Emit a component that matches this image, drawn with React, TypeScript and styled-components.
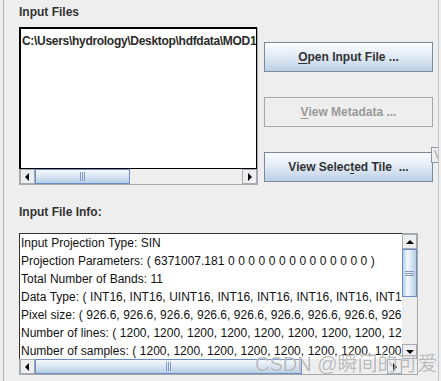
import React from 'react'
import { styled, createGlobalStyle } from 'styled-components'

const GlobalStyle = createGlobalStyle`
  html, body {
    margin: 0;
    padding: 0;
    background: #eeeeee;
  }
  body {
    font-family: "Liberation Sans", Arial, sans-serif;
    font-size: 12px;
  }
`;

const Window = styled.div`
  position: relative;
  width: 438px;
  height: 381px;
  border-right: 1px solid #c4c4c4;
  overflow: hidden;
`;

const Panel = styled.div`
  margin-left: 3px;
  width: 430px;
  height: 381px;
  border-left: 1px solid #b4b4b4;
  border-right: 1px solid #c4c4c4;
  padding-left: 15px;
  box-sizing: content-box;
`;

const SectionTitle = styled.div<{ $top: number; $bottom: number }>`
  padding-top: ${({ $top }) => $top}px;
  padding-bottom: ${({ $bottom }) => $bottom}px;
  line-height: 16px;
  font-weight: 700;
  color: #333333;
`;

const TopRow = styled.div`
  display: flex;
  gap: 6px;
`;

const ScrollPane = styled.div<{ $width: number; $height: number }>`
  width: ${({ $width }) => $width}px;
  height: ${({ $height }) => $height}px;
  flex-shrink: 0;
  display: grid;
  grid-template-rows: minmax(0, 1fr) 15px;
  grid-template-columns: minmax(0, 1fr);
  box-sizing: border-box;
  border: 1px solid #a8a8a8;
  border-top: none;
  border-left: none;
  overflow: hidden;
`;

const ViewRow = styled.div`
  display: flex;
  min-height: 0;
  min-width: 0;
`;

const Viewport = styled.div`
  flex: 1;
  min-width: 0;
  background: #ffffff;
  border-top: 2px solid #000000;
  border-left: 2px solid #000000;
  border-right: 1px solid #000000;
  border-bottom: 1px solid #000000;
  overflow: hidden;
  white-space: nowrap;
`;

const TextViewport = styled(Viewport)`
  border-top: 1px solid #333;
  border-left: 1px solid #333;
  border-right: none;
  border-bottom: none;
`;

const PathLine = styled.div`
  padding: 4px 0 0 1px;
  line-height: 16px;
  font-weight: 700;
  color: #2a2a2a;
  letter-spacing: -0.3px;
`;

const InfoLine = styled.div`
  padding-left: 1px;
  line-height: 18px;
  color: #111111;
  word-spacing: 0.2px;
`;

const HBar = styled.div<{ $corner?: boolean }>`
  display: grid;
  grid-template-columns: 15px minmax(0, 1fr) 15px ${({ $corner }) => ($corner ? '15px' : '')};
  background: #eeeeee;
  border-left: 1px solid #a8a8a8;
`;

const VBar = styled.div`
  width: 15px;
  flex-shrink: 0;
  display: grid;
  grid-template-rows: 15px minmax(0, 1fr) 15px;
  background: #eeeeee;
  border-top: 1px solid #a8a8a8;
`;

const ArrowButton = styled.div`
  display: flex;
  align-items: center;
  justify-content: center;
  background: #eeeeee;
  border: 1px solid #a3aab3;
  box-sizing: border-box;
`;

const Track = styled.div`
  position: relative;
  background: #eeeeee;
`;

const Thumb = styled.div<{ $vertical?: boolean }>`
  position: absolute;
  display: flex;
  align-items: center;
  justify-content: center;
  box-sizing: border-box;
  border: 1px solid #6a8cc6;
  background: ${({ $vertical }) =>
    $vertical
      ? 'linear-gradient(to right, #b8cfe5 0%, #f4f8fc 35%, #dce7f3 60%, #b8cfe5 100%)'
      : 'linear-gradient(to bottom, #f4f8fc 0%, #dce7f3 45%, #b8cfe5 100%)'};
`;

const Grip = styled.div<{ $vertical?: boolean }>`
  display: flex;
  flex-direction: ${({ $vertical }) => ($vertical ? 'column' : 'row')};
  gap: 1px;
  & > span {
    display: block;
    background: #7f98c4;
    width: ${({ $vertical }) => ($vertical ? '9px' : '1px')};
    height: ${({ $vertical }) => ($vertical ? '1px' : '9px')};
  }
`;

const Corner = styled.div`
  background: #eeeeee;
`;

const ButtonColumn = styled.div`
  display: flex;
  flex-direction: column;
  gap: 25px;
  padding-top: 15px;
`;

const Button = styled.div<{ $disabled?: boolean }>`
  width: 169px;
  height: 30px;
  box-sizing: border-box;
  display: flex;
  align-items: center;
  justify-content: center;
  white-space: pre;
  font-weight: 700;
  color: ${({ $disabled }) => ($disabled ? '#999999' : '#333333')};
  border: 1px solid ${({ $disabled }) => ($disabled ? '#a8a8a8' : '#7a8a99')};
  background: ${({ $disabled }) =>
    $disabled ? '#eeeeee' : 'linear-gradient(to bottom, #fbfcfe 0%, #e6eef7 40%, #cfdded 75%, #b8cfe5 100%)'};
  & u {
    text-decoration: underline;
    text-underline-offset: 2px;
  }
`;

const TipBox = styled.div`
  position: absolute;
  left: 431px;
  top: 147px;
  width: 20px;
  height: 16px;
  box-sizing: border-box;
  border: 1px solid #8c97a3;
  background: #f0f0f0;
  color: #9aa3ad;
  font-size: 12px;
  line-height: 14px;
  padding-left: 2px;
`;

const Watermark = styled.div`
  position: absolute;
  left: 255px;
  top: 352px;
  font-family: "Liberation Sans", "Noto Sans CJK SC", sans-serif;
  font-size: 20px;
  line-height: 24px;
  color: rgba(130, 130, 130, 0.55);
  text-shadow: 0 0 1px rgba(255, 255, 255, 0.9);
  white-space: nowrap;
  pointer-events: none;
`;

const Tri = ({ dir }: { dir: 'left' | 'right' | 'up' | 'down' }) => {
  const pts = {
    left: '6,1 6,9 2,5',
    right: '3,1 3,9 7,5',
    up: '1,7 9,7 5,3',
    down: '1,3 9,3 5,7',
  }[dir]
  return (
    <svg width="10" height="10" viewBox="0 0 10 10">
      <polygon points={pts} fill="#000" />
    </svg>
  )
}

const GripLines = ({ vertical }: { vertical?: boolean }) => (
  <Grip $vertical={vertical}>
    <span />
    <span />
    <span />
  </Grip>
)

const infoLines = [
  'Input Projection Type: SIN',
  'Projection Parameters: ( 6371007.181 0 0 0 0 0 0 0 0 0 0 0 0 0 0 )',
  'Total Number of Bands: 11',
  'Data Type: ( INT16, INT16, UINT16, INT16, INT16, INT16, INT16, INT16, INT16, INT16, UINT8 )',
  'Pixel size: ( 926.6, 926.6, 926.6, 926.6, 926.6, 926.6, 926.6, 926.6, 926.6, 926.6, 926.6 )',
  'Number of lines: ( 1200, 1200, 1200, 1200, 1200, 1200, 1200, 1200, 1200, 1200, 1200 )',
  'Number of samples: ( 1200, 1200, 1200, 1200, 1200, 1200, 1200, 1200, 1200, 1200, 1200 )',
]

export default function App() {
  return (
    <>
      <GlobalStyle />
      <Window>
        <Panel>
          <SectionTitle $top={4} $bottom={7}>Input Files</SectionTitle>
          <TopRow>
            <ScrollPane $width={239} $height={158}>
              <Viewport>
                <PathLine>C:\Users\hydrology\Desktop\hdfdata\MOD13A2.A2020001.h26v05.006.hdf</PathLine>
              </Viewport>
              <HBar>
                <ArrowButton><Tri dir="left" /></ArrowButton>
                <Track>
                  <Thumb style={{ left: 0, top: 0, width: 95, height: 15 }}>
                    <GripLines />
                  </Thumb>
                </Track>
                <ArrowButton><Tri dir="right" /></ArrowButton>
              </HBar>
            </ScrollPane>
            <ButtonColumn>
              <Button><span><u>O</u>pen Input File ...</span></Button>
              <Button $disabled><span><u>V</u>iew Metadata ...</span></Button>
              <Button><span>View Selec<u>t</u>ed Tile  ...</span></Button>
            </ButtonColumn>
          </TopRow>
          <SectionTitle $top={19} $bottom={13}>Input File Info:</SectionTitle>
          <ScrollPane $width={399} $height={142}>
            <ViewRow>
              <TextViewport>
                {infoLines.map((line) => (
                  <InfoLine key={line}>{line}</InfoLine>
                ))}
              </TextViewport>
              <VBar>
                <ArrowButton><Tri dir="up" /></ArrowButton>
                <Track>
                  <Thumb $vertical style={{ left: 0, top: 0, width: 15, height: 48 }}>
                    <GripLines vertical />
                  </Thumb>
                </Track>
                <ArrowButton><Tri dir="down" /></ArrowButton>
              </VBar>
            </ViewRow>
            <HBar $corner>
              <ArrowButton><Tri dir="left" /></ArrowButton>
              <Track>
                <Thumb style={{ left: 0, top: 0, width: 267, height: 15 }}>
                  <GripLines />
                </Thumb>
              </Track>
              <ArrowButton><Tri dir="right" /></ArrowButton>
              <Corner />
            </HBar>
          </ScrollPane>
        </Panel>
        <TipBox>V</TipBox>
        <Watermark>CSDN @瞬间的可爱</Watermark>
      </Window>
    </>
  )
}
